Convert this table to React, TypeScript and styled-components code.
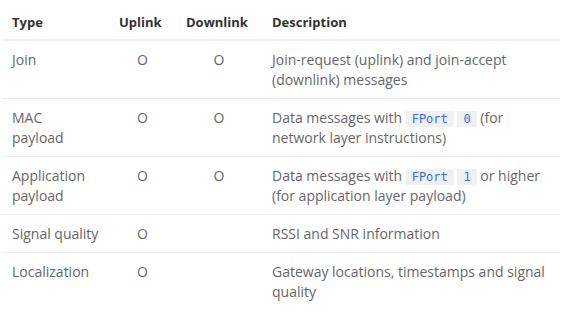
import styled, { createGlobalStyle } from 'styled-components';

const GlobalStyle = createGlobalStyle`
    body {
        margin: 0;
        background: #fff;
        font-family: 'Open Sans', 'Noto Sans', sans-serif;
    }
`;

const Wrapper = styled.div`
    padding: 0 17px 0 2px;
`;

const Table = styled.table`
    width: 100%;
    table-layout: fixed;
    border-collapse: collapse;
    font-size: 14px;
    line-height: 20px;
    color: #666;
`;

const Col = styled.col<{ $width?: number }>`
    width: ${(p) => (p.$width ? `${p.$width}px` : 'auto')};
`;

const HeadCell = styled.th`
    padding: 12px 10px 7px;
    text-align: left;
    font-size: 13px;
    font-weight: 700;
    color: #333;
    border-bottom: 2px solid #eee;
    white-space: nowrap;
`;

const Row = styled.tr`
    border-bottom: 1px solid #eee;
    &:last-child {
        border-bottom: none;
    }
`;

const Cell = styled.td<{ $center?: boolean }>`
    padding: 9px 10px 8px;
    vertical-align: top;
    text-align: ${(p) => (p.$center ? 'center' : 'left')};
`;

const TypeCell = styled(Cell)`
    padding-right: 4px;
    white-space: pre-line;
`;

const Code = styled.code`
    font-family: 'DejaVu Sans Mono', 'Liberation Mono', monospace;
    font-size: 12px;
    line-height: 1;
    color: #3a6ee0;
    background: #f0f0f0;
    padding: 1px 6px;
`;

type Entry = {
    type: string;
    uplink: boolean;
    downlink: boolean;
    desc: React.ReactNode;
};

const rows: Entry[] = [
    {
        type: 'Join',
        uplink: true,
        downlink: true,
        desc: 'Join-request (uplink) and join-accept (downlink) messages',
    },
    {
        type: 'MAC\npayload',
        uplink: true,
        downlink: true,
        desc: (
            <>
                Data messages with <Code>FPort</Code> <Code>0</Code> (for network layer instructions)
            </>
        ),
    },
    {
        type: 'Application payload',
        uplink: true,
        downlink: true,
        desc: (
            <>
                Data messages with <Code>FPort</Code> <Code>1</Code> or higher (for application layer payload)
            </>
        ),
    },
    { type: 'Signal quality', uplink: true, downlink: false, desc: 'RSSI and SNR information' },
    {
        type: 'Localization',
        uplink: true,
        downlink: false,
        desc: 'Gateway locations, timestamps and signal quality',
    },
];

export default function App() {
    return (
        <>
            <GlobalStyle />
            <Wrapper>
                <Table>
                    <colgroup>
                        <Col $width={107} />
                        <Col $width={67} />
                        <Col $width={86} />
                        <Col />
                    </colgroup>
                    <thead>
                        <tr>
                            <HeadCell>Type</HeadCell>
                            <HeadCell>Uplink</HeadCell>
                            <HeadCell>Downlink</HeadCell>
                            <HeadCell>Description</HeadCell>
                        </tr>
                    </thead>
                    <tbody>
                        {rows.map((r) => (
                            <Row key={r.type}>
                                <TypeCell>{r.type}</TypeCell>
                                <Cell $center>{r.uplink ? 'O' : ''}</Cell>
                                <Cell $center>{r.downlink ? 'O' : ''}</Cell>
                                <Cell>{r.desc}</Cell>
                            </Row>
                        ))}
                    </tbody>
                </Table>
            </Wrapper>
        </>
    );
}
